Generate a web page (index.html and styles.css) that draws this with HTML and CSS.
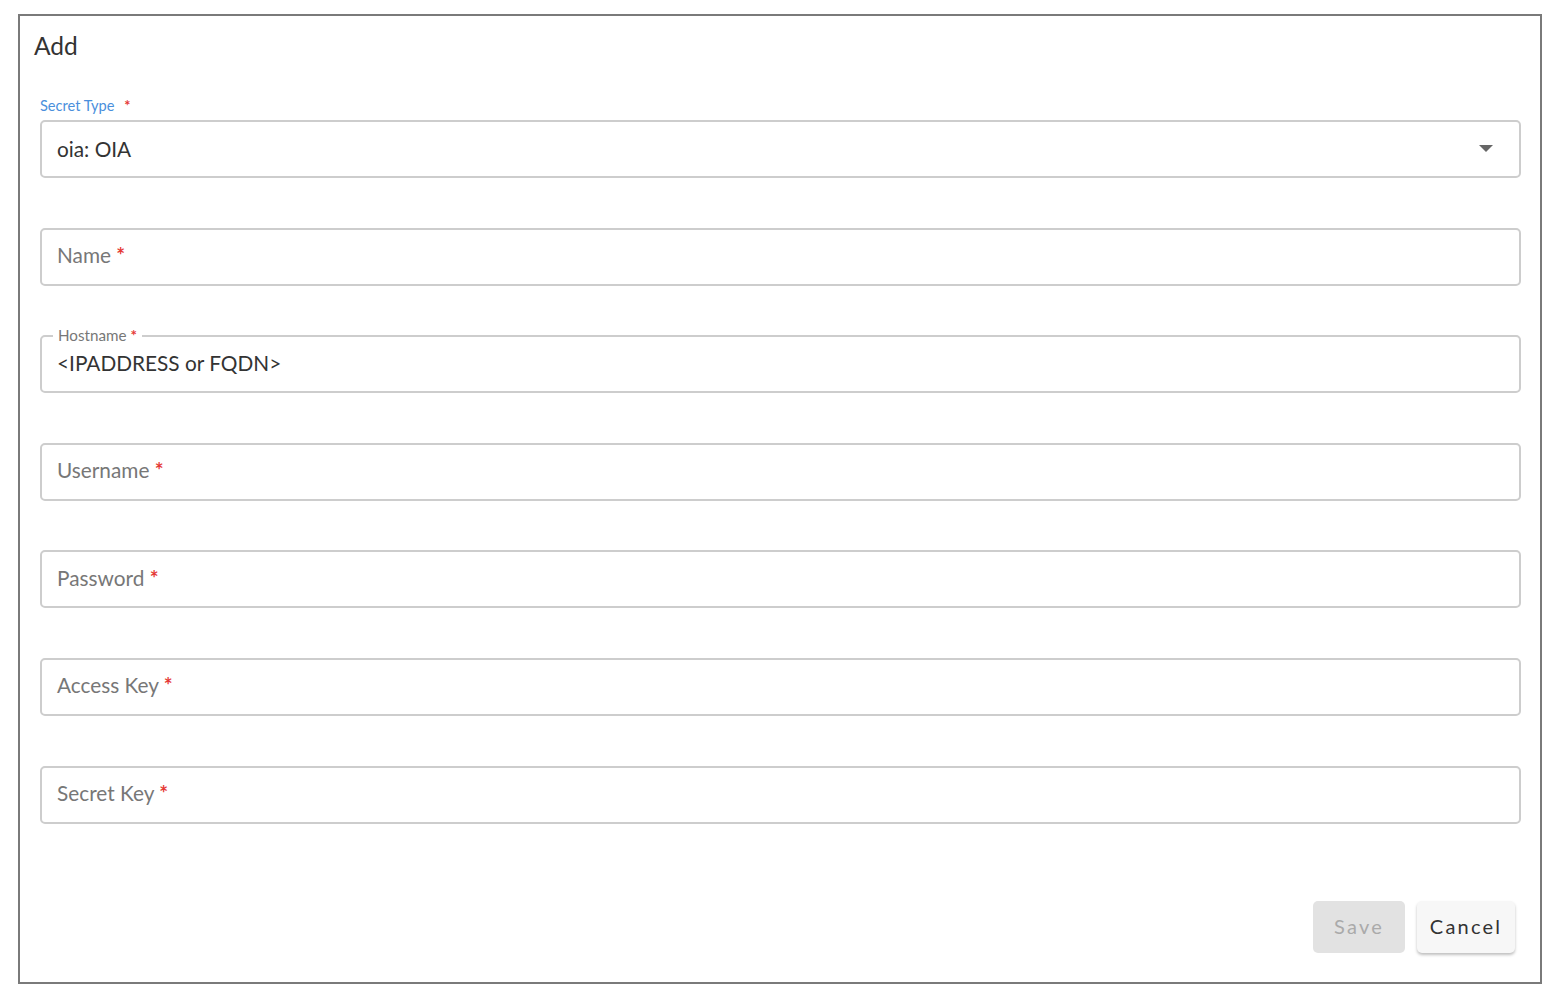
FILE: index.html
```html
<!DOCTYPE html>
<html>
<head>
<meta charset="utf-8">
<link rel="stylesheet" href="styles.css">
</head>
<body>
<div class="frame">
  <div class="title">Add</div>
  <div class="form">
    <div class="select-group">
      <div class="select-label">Secret Type <span class="req">*</span></div>
      <div class="field select">
        <span class="value">oia: OIA</span>
        <span class="caret"></span>
      </div>
    </div>
    <div class="field"><span class="ph">Name <span class="req">*</span></span></div>
    <div class="field outlined">
      <span class="float-label">Hostname <span class="req">*</span></span>
      <span class="value">&lt;IPADDRESS or FQDN&gt;</span>
    </div>
    <div class="field"><span class="ph">Username <span class="req">*</span></span></div>
    <div class="field"><span class="ph">Password <span class="req">*</span></span></div>
    <div class="field"><span class="ph">Access Key <span class="req">*</span></span></div>
    <div class="field"><span class="ph">Secret Key <span class="req">*</span></span></div>
  </div>
  <div class="actions">
    <button class="btn save">Save</button>
    <button class="btn cancel">Cancel</button>
  </div>
</div>
</body>
</html>
```
FILE: styles.css
```css
html, body {
  margin: 0;
  padding: 0;
  background: #ffffff;
}
body {
  font-family: Lato, "Open Sans", "Noto Sans", sans-serif;
  color: #333;
}
.frame {
  box-sizing: border-box;
  margin: 14px 0 0 18px;
  width: 1524px;
  height: 970px;
  border: 2px solid #7a7a7a;
  display: flex;
  flex-direction: column;
  padding: 15px 19px 0 20px;
}
.title {
  font-size: 24.5px;
  line-height: 30px;
  color: #333;
  margin-left: -6px;
  height: 30px;
}
.form {
  margin-top: 37px;
  display: flex;
  flex-direction: column;
  gap: 49.6px;
}
.select-group {
  display: flex;
  flex-direction: column;
}
.select-label {
  font-size: 14.6px;
  line-height: 16px;
  color: #4a8fdc;
  margin-bottom: 6px;
}
.select-label .req {
  margin-left: 6px;
}
.req {
  color: #e53935;
  font-weight: 700;
}
.field {
  box-sizing: border-box;
  position: relative;
  height: 58px;
  border: 2px solid #cdcdcd;
  border-radius: 5px;
  display: flex;
  align-items: center;
  padding: 0 15px 4px;
  font-size: 20.8px;
}
.value {
  color: #333;
}
.ph {
  color: #777;
}
.select {
  justify-content: space-between;
  padding-bottom: 2px;
}
.caret {
  width: 0;
  height: 0;
  border-left: 7px solid transparent;
  border-right: 7px solid transparent;
  border-top: 7px solid #666;
  margin-right: 11px;
}
.float-label {
  position: absolute;
  left: 11px;
  top: -11px;
  padding: 0 5px;
  background: #fff;
  font-size: 15.2px;
  line-height: 18px;
  color: #777;
}
.actions {
  margin-top: auto;
  margin-bottom: 29px;
  margin-right: 6px;
  display: flex;
  justify-content: flex-end;
  gap: 12px;
}
.btn {
  font-family: Lato, "Open Sans", sans-serif;
  font-size: 20px;
  letter-spacing: 2.2px;
  height: 52px;
  border: none;
  border-radius: 5px;
  padding: 0 0 2px;
}
.save {
  width: 92px;
  background: #e2e2e2;
  color: #aaaaaa;
}
.cancel {
  width: 98px;
  background: #f7f7f7;
  color: #333;
  box-shadow: 0 2px 3px rgba(0,0,0,0.25);
}
```
